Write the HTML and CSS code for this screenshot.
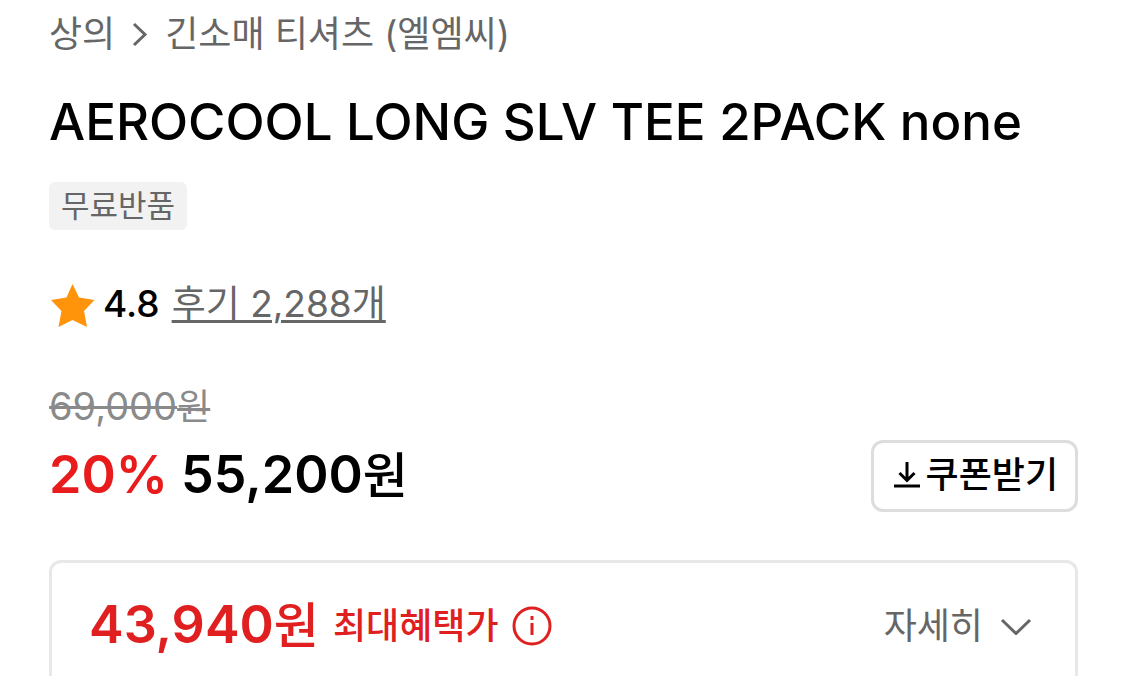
FILE: index.html
```html
<!DOCTYPE html>
<html lang="ko">
<head>
    <meta charset="UTF-8">
    <meta name="viewport" content="width=device-width, initial-scale=1">
    <title>AEROCOOL LONG SLV TEE 2PACK none</title>
    <link rel="stylesheet" href="styles.css">
</head>
<body>
    <main class="product">
        <nav class="breadcrumb">
            <a href="#">상의</a>
            <svg class="breadcrumb-arrow" viewBox="0 0 16 26" aria-hidden="true">
                <path d="M2 3l11 10.500L2 24"/>
            </svg>
            <a href="#">긴소매 티셔츠 (엘엠씨)</a>
        </nav>

        <h1 class="title">AEROCOOL LONG SLV TEE 2PACK none</h1>

        <span class="tag">무료반품</span>

        <div class="rating">
            <svg class="star" viewBox="-2 -3 46 46" aria-hidden="true">
                <path d="M21.500 0L28 13.500 43.500 16 33 27 36 43 21.500 36 7.500 43 10.500 27 0 16l15.500-2.500z"/>
            </svg>
            <strong class="score">4.8</strong>
            <a class="reviews" href="#">후기 2,288개</a>
        </div>

        <del class="original-price">69,000<span class="won">원</span></del>
        <div class="price-row">
            <p class="price"><span class="discount">20%</span> 55,200<span class="won">원</span></p>
            <button type="button" class="coupon">
                <svg class="download" viewBox="0 0 26 26" aria-hidden="true">
                    <path d="M13 0v18M5.500 11l7.500 7.500L20.500 11M0 24h26"/>
                </svg>
                쿠폰받기
            </button>
        </div>

        <section class="benefit">
            <p class="benefit-price">43,940<span class="won">원</span></p>
            <span class="benefit-label">최대혜택가</span>
            <button type="button" class="info" aria-label="최대혜택가 안내">
                <svg viewBox="0 0 40 40" aria-hidden="true">
                    <circle cx="20" cy="20" r="18"/>
                    <path d="M20 10v4M20 17v12"/>
                </svg>
            </button>
            <button type="button" class="more">
                자세히
                <svg class="chevron" viewBox="0 0 32 18" aria-hidden="true">
                    <path d="M2 3l14 13.500L30 3"/>
                </svg>
            </button>
        </section>
    </main>
</body>
</html>
```

FILE: styles.css
```css
* {
    box-sizing: border-box;
}
body {
    margin: 0;
    background: #fff;
    color: #000;
    font-family: Inter, "Noto Sans CJK KR", sans-serif;
    font-size: 36px;
    line-height: 48px;
}
h1, p {
    margin: 0;
}
a {
    color: #666;
    text-decoration: none;
}
button {
    padding: 0;
    border: none;
    background: none;
    color: inherit;
    font: inherit;
    cursor: pointer;
}
svg {
    display: block;
    flex: none;
    fill: none;
    stroke: currentColor;
    stroke-width: 3;
}
.product {
    display: flex;
    flex-direction: column;
    align-items: flex-start;
    padding: 10px 47px 0 49px;
}
.breadcrumb {
    display: flex;
    align-items: center;
    gap: 17px;
    color: #666;
}
.breadcrumb-arrow {
    width: 16px;
    height: 26px;
}
.title {
    margin-top: 32px;
    font-size: 51px;
    font-weight: 500;
    line-height: 64px;
}
.tag {
    margin-top: 28px;
    padding: 0 12px;
    border-radius: 6px;
    background: #f2f2f2;
    color: #666;
    font-size: 31px;
}
.rating {
    display: flex;
    align-items: center;
    margin-top: 50px;
    font-size: 37px;
}
.star {
    width: 46px;
    height: 46px;
    margin-right: 8px;
    fill: #ff9309;
    stroke: none;
}
.score {
    margin-right: 12px;
    font-weight: 500;
}
.reviews {
    text-decoration: underline;
    text-decoration-thickness: 3px;
    text-underline-offset: 3px;
}
.original-price {
    margin-top: 54px;
    color: #8a8a8a;
    font-size: 38px;
    text-decoration-thickness: 3px;
}
.original-price .won {
    font-size: 36px;
}
.price-row {
    display: flex;
    align-items: center;
    justify-content: space-between;
    width: 100%;
    margin-top: 8px;
}
.price,
.benefit-price {
    font-size: 52px;
    font-weight: 600;
    line-height: 72px;
}
.price .won,
.benefit-price .won {
    font-size: 49px;
    font-weight: 500;
}
.discount {
    color: #e81c1c;
}
.coupon {
    display: flex;
    align-items: center;
    gap: 6px;
    height: 72px;
    padding: 0 17px 2px 20px;
    border: 3px solid #ddd;
    border-radius: 12px;
    font-weight: 500;
}
.download {
    width: 26px;
    height: 26px;
}
.benefit {
    display: flex;
    align-items: center;
    width: 100%;
    margin-top: 48px;
    padding: 26px 43px 16px 37px;
    border: 3px solid #e8e8e8;
    border-bottom: none;
    border-radius: 12px 12px 0 0;
    color: #e02020;
}
.benefit-label {
    margin-left: 14px;
    font-weight: 500;
}
.info {
    width: 40px;
    height: 40px;
    margin-left: 13px;
}
.more {
    display: flex;
    align-items: center;
    gap: 17px;
    margin-left: auto;
    color: #666;
}
.chevron {
    width: 32px;
    height: 18px;
}
```
